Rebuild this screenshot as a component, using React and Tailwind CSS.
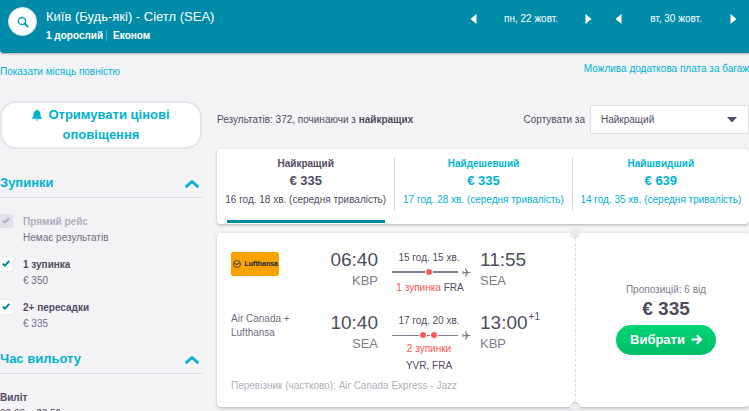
import React from "react";

const airlineLegs = [
  {
    airline: "Lufthansa",
    logo: true,
    depart: "06:40",
    from: "KBP",
    duration: "15 год. 15 хв.",
    stops: 1,
    stopLabel: "1 зупинка",
    via: "FRA",
    arrive: "11:55",
    to: "SEA",
  },
  {
    airline: "Air Canada + Lufthansa",
    depart: "10:40",
    from: "SEA",
    duration: "17 год. 20 хв.",
    stops: 2,
    stopLabel: "2 зупинки",
    via: "YVR, FRA",
    arrive: "13:00",
    plus: "+1",
    to: "KBP",
  },
];

const tabs = [
  { name: "Найкращий", price: "€ 335", time: "16 год. 18 хв. (середня тривалість)", active: true },
  { name: "Найдешевший", price: "€ 335", time: "17 год. 28 хв. (середня тривалість)" },
  { name: "Найшвидший", price: "€ 639", time: "14 год. 35 хв. (середня тривалість)" },
];

const stops = [
  { id: "direct", name: "Прямий рейс", note: "Немає результатів", disabled: true },
  { id: "one", name: "1 зупинка", note: "€ 350" },
  { id: "two", name: "2+ пересадки", note: "€ 335" },
];

function DateStepper({ label }) {
  return (
    <div className="flex w-[122px] items-center justify-between">
      <button type="button" aria-label="Попередній день">
        <svg className="h-3 w-[7px]" viewBox="0 0 7 12" fill="white"><path d="M6.500 1v10L.5 6z" /></svg>
      </button>
      <span>{label}</span>
      <button type="button" aria-label="Наступний день">
        <svg className="h-3 w-[7px]" viewBox="0 0 7 12" fill="white"><path d="M.5 1v10l6-5z" /></svg>
      </button>
    </div>
  );
}

function Header() {
  return (
    <header className="flex h-[53px] items-start justify-between rounded-bl bg-[#008ca8] pr-3 pl-2 text-white shadow-[0_1px_2px_rgba(0,0,0,0.3)]">
      <div className="flex gap-[9px] pt-[7px]">
        <button type="button" aria-label="Пошук" className="flex size-[29px] items-center justify-center rounded-full border border-[#d5e4ea] bg-white">
          <svg className="size-3" viewBox="0 0 12 12" fill="none" stroke="#00a4c4">
            <circle cx="5" cy="5" r="3.600" strokeWidth="1.500" />
            <path d="M7.800 7.800l2.700 2.700" strokeWidth="2" strokeLinecap="round" />
          </svg>
        </button>
        <div>
          <h1 className="text-[13px] leading-5">Київ (Будь-які) - Сіетл (SEA)</h1>
          <p className="mt-[3px] flex text-[10px] leading-[11px] font-bold">
            <span className="border-r border-[#4db3c8] pr-[3px]">1 дорослий</span>
            <span className="pl-[6px]">Економ</span>
          </p>
        </div>
      </div>
      <div className="flex gap-[23px] pt-[11px] text-[10px] leading-4">
        <DateStepper label="пн, 22 жовт." />
        <DateStepper label="вт, 30 жовт." />
      </div>
    </header>
  );
}

function SectionTitle({ children }) {
  return (
    <h2 className="border-b border-[#dddbe2] text-[13px] leading-7 font-bold text-[#00b2d6]">
      <button type="button" className="flex w-full items-center justify-between pr-[3px]">
        {children}
        <svg className="h-[9px] w-[14px]" viewBox="0 0 14 9" fill="none" stroke="#00b2d6" strokeWidth="2.800">
          <path d="M1.500 7.500L7 2.500l5.500 5" strokeLinejoin="round" strokeLinecap="round" />
        </svg>
      </button>
    </h2>
  );
}

function StopOption({ id, name, note, disabled }) {
  return (
    <li className="flex gap-[10px]">
      <span className="grid h-[14px] w-[13px]">
        <input
          id={id}
          type="checkbox"
          defaultChecked
          disabled={disabled}
          className="col-start-1 row-start-1 h-[14px] w-[13px] appearance-none rounded-r-xs bg-white shadow-[0_0_1px_rgba(82,76,97,0.4)] disabled:bg-[#e2e0e8] disabled:shadow-none"
        />
        <svg className={`pointer-events-none col-start-1 row-start-1 mt-[3px] ml-[2px] h-[7px] w-2 ${disabled ? "stroke-[#b2aebd]" : "stroke-[#0087a3]"}`} viewBox="0 0 8 7" fill="none" strokeWidth="2">
          <path d="M.8 3.600l2 2L7.300 1" />
        </svg>
      </span>
      <label htmlFor={id} className="text-[10px] leading-4">
        <span className={`block font-bold ${disabled ? "text-[#b2aebd]" : "text-[#524c61]"}`}>{name}</span>
        <span className="block text-[#746e82]">{note}</span>
      </label>
    </li>
  );
}

function Sidebar() {
  return (
    <aside className="w-[202px] shrink-0">
      <button type="button" className="w-full rounded-2xl border-2 border-[#e6e4eb] bg-white pt-[2px] pb-[2px] text-[13px] leading-5 font-bold text-[#00b2d6]">
        <svg className="mr-[6px] inline-block h-3 w-[10px] align-[-2px]" viewBox="0 0 10 12" fill="#00b2d6">
          <path d="M5 .5c.6 0 .9.4.9.9C7.800 1.900 8.500 3.400 8.500 5v2.300L10 9v.7H0V9l1.500-1.700V5c0-1.600.7-3.100 2.600-3.600 0-.5.300-.9.900-.9zM3.800 10.400h2.400c0 .8-.5 1.200-1.200 1.200s-1.200-.4-1.200-1.200z" />
        </svg>
        Отримувати цінові
        <br />
        оповіщення
      </button>
      <section className="mt-5">
        <SectionTitle>Зупинки</SectionTitle>
        <ul className="mt-4 flex flex-col gap-[11px]">
          {stops.map((s) => <StopOption key={s.id} {...s} />)}
        </ul>
      </section>
      <section className="mt-[13px]">
        <SectionTitle>Час вильоту</SectionTitle>
        <h3 className="mt-4 text-[10px] leading-4 font-bold">Виліт</h3>
        <p className="text-[10px] leading-4">00:00 – 23:59</p>
      </section>
    </aside>
  );
}

function SortTabs() {
  return (
    <div className="flex rounded bg-white py-2 shadow-[0_1px_3px_rgba(37,32,31,0.3)]">
      {tabs.map((t) => (
        <button
          key={t.name}
          type="button"
          className={`-mb-2 flex flex-1 flex-col items-center ${t.active ? "text-[#524c61]" : "text-[#00b2d6]"}`}
        >
          <span className={`flex w-full flex-col items-center whitespace-nowrap pb-[3px] ${t.active ? "" : "border-l border-[#dddbe2]"}`}>
            <span className="text-[10px] leading-[14px] font-bold">{t.name}</span>
            <span className="text-[13px] leading-5 font-bold">{t.price}</span>
            <span className="text-[10px] leading-[17px]">{t.time}</span>
          </span>
          <span className={`mt-[9px] mb-px h-[3px] w-[158px] ${t.active ? "bg-[#008ca8]" : ""}`} />
        </button>
      ))}
    </div>
  );
}

function StopLine({ count }) {
  return (
    <div className="flex h-[10px] items-center">
      <span className={`flex w-[66px] shrink-0 items-center justify-center gap-[3px] bg-[#817b8f] ${count === 1 ? "h-[2px] pl-2" : "h-px pl-[6px]"}`}>
        {Array.from({ length: count }, (_, i) => (
          <span key={i} className="size-2 shrink-0 rounded-full border border-white bg-[#ff5452]" />
        ))}
      </span>
      <svg className="ml-1 size-[9px]" viewBox="0 0 10 10" fill="#817b8f">
        <path d="M3.300.3h1L6.800 4.400h2c.6 0 1 .2 1 .6s-.4.600-1 .600h-2L4.300 9.700h-1l1.200-4H2L1.100 7H.3l.5-2L.3 3h.8L2 4.400h2.500z" />
      </svg>
    </div>
  );
}

function Leg({ leg }) {
  return (
    <div className="flex">
      <div className="w-[72px] text-[10px] leading-[14px] text-[#746e82]">
        {leg.logo ? (
          <div className="mt-[3px] flex h-6 w-12 items-center justify-end gap-1 rounded-xs bg-[#faa200] pr-px text-[#0b2245]">
            <svg className="size-2 shrink-0" viewBox="0 0 8 8" fill="none" stroke="#0b2245" strokeWidth=".7">
              <circle cx="4" cy="4" r="3.500" />
              <path d="M1 3.200c1.500 0 1.700 1.800 2.700 1.500L7 2.800M3 3.800l1.700.2" />
            </svg>
            <span className="text-[7px] font-bold">{leg.airline}</span>
          </div>
        ) : (
          <p>{leg.airline}</p>
        )}
      </div>
      <div className="w-[75px] text-right">
        <p className="text-[19px] leading-[22px]">{leg.depart}</p>
        <p className="text-[13px] leading-5 text-[#817b8f]">{leg.from}</p>
      </div>
      <div className="ml-[14px] w-[79px] text-[10px]">
        <p className="w-[74px] text-center leading-[18px] whitespace-nowrap">{leg.duration}</p>
        <StopLine count={leg.stops} />
        {leg.stops === 1 ? (
          <p className="mt-1 w-[76px] text-center leading-[14px] whitespace-nowrap">
            <span className="text-[#ff5452]">{leg.stopLabel}</span> {leg.via}
          </p>
        ) : (
          <p className="w-[74px] text-center leading-[17px]">
            <span className="block text-[#ff5452]">{leg.stopLabel}</span>
            <span className="block">{leg.via}</span>
          </p>
        )}
      </div>
      <div className="ml-[9px]">
        <p className="flex text-[19px] leading-[22px]">
          {leg.arrive}
          {leg.plus && <sup className="top-0 ml-px text-[10px] leading-[10px]">{leg.plus}</sup>}
        </p>
        <p className="text-[13px] leading-5 text-[#817b8f]">{leg.to}</p>
      </div>
    </div>
  );
}

function FlightCard() {
  return (
    <article className="flex rounded bg-white shadow-[0_1px_3px_rgba(37,32,31,0.3)]">
      <div className="w-[358px] shrink-0 pt-4 pl-[14px]">
        <div className="h-[63px]"><Leg leg={airlineLegs[0]} /></div>
        <div className="h-[65px]"><Leg leg={airlineLegs[1]} /></div>
        <p className="pt-px pb-[13px] text-[10px] leading-4 text-[#b2aebd]">
          Перевізник (частково): Air Canada Express - Jazz
        </p>
      </div>
      <div className="flex flex-1 flex-col items-center justify-center overflow-hidden border-l border-dashed border-[#dddbe2] pb-1">
        <div className="mr-[-7px] flex flex-col items-center">
          <p className="text-[10px] leading-4 text-[#817b8f]">Пропозицій: 6 від</p>
          <p className="text-[19px] leading-[22px] font-bold">€ 335</p>
          <button type="button" className="mt-[5px] flex h-[30px] items-center gap-[6px] rounded-full bg-linear-to-b from-[#00d775] to-[#00bd68] px-[14px] text-[13px] font-bold text-white">
            Вибрати
            <svg className="size-[11px]" viewBox="0 0 11 11" fill="none" stroke="white" strokeWidth="2.200">
              <path d="M.5 5.500h9M5.800 1.300L10 5.500 5.800 9.700" strokeLinejoin="round" />
            </svg>
          </button>
        </div>
      </div>
    </article>
  );
}

function TicketNotches() {
  return (
    <div className="pointer-events-none absolute inset-y-0 left-[353px] w-[10px]">
      <span className="absolute top-[-5px] size-[10px] rounded-full border-b border-[#d3d2da] bg-[#ececf0]" />
      <span className="absolute bottom-[-5px] size-[10px] rounded-full border-t border-[#c4c3cb] bg-[#ececf0]" />
    </div>
  );
}

export default function App() {
  return (
    <div className="h-screen overflow-hidden bg-[#f3f2f5] font-['Liberation_Sans',Arial,sans-serif] text-[#524c61]">
      <Header />
      <div className="flex h-12 justify-between text-[10px] leading-4 whitespace-nowrap text-[#00b2d6]">
        <a href="#month" className="pt-[11px]">Показати місяць повністю</a>
        <a href="#baggage" className="pt-2">Можлива додаткова плата за багаж</a>
      </div>
      <div className="flex gap-[15px]">
        <Sidebar />
        <main className="min-w-0 flex-1">
          <div className="flex items-center justify-between pt-1 text-[10px] leading-4">
            <p>Результатів: 372, починаючи з <b>найкращих</b></p>
            <div className="flex items-center gap-[5px]">
              <label htmlFor="sort">Сортувати за</label>
              <div className="grid w-[159px] items-center">
                <select id="sort" className="col-start-1 row-start-1 h-[29px] appearance-none rounded-xs border border-[#dddbe2] bg-white pl-[10px] text-[10px]">
                  <option>Найкращий</option>
                  <option>Найдешевший</option>
                  <option>Найшвидший</option>
                </select>
                <svg className="pointer-events-none col-start-1 row-start-1 mr-3 h-[5px] w-[10px] justify-self-end" viewBox="0 0 10 5" fill="#524c61"><path d="M0 0h10L6 4.600a1.500 1.500 0 0 1-2 0z" /></svg>
              </div>
            </div>
          </div>
          <div className="mt-[15px] flex flex-col gap-[9px]">
            <SortTabs />
            <div className="relative">
              <FlightCard />
              <TicketNotches />
            </div>
          </div>
        </main>
      </div>
    </div>
  );
}
